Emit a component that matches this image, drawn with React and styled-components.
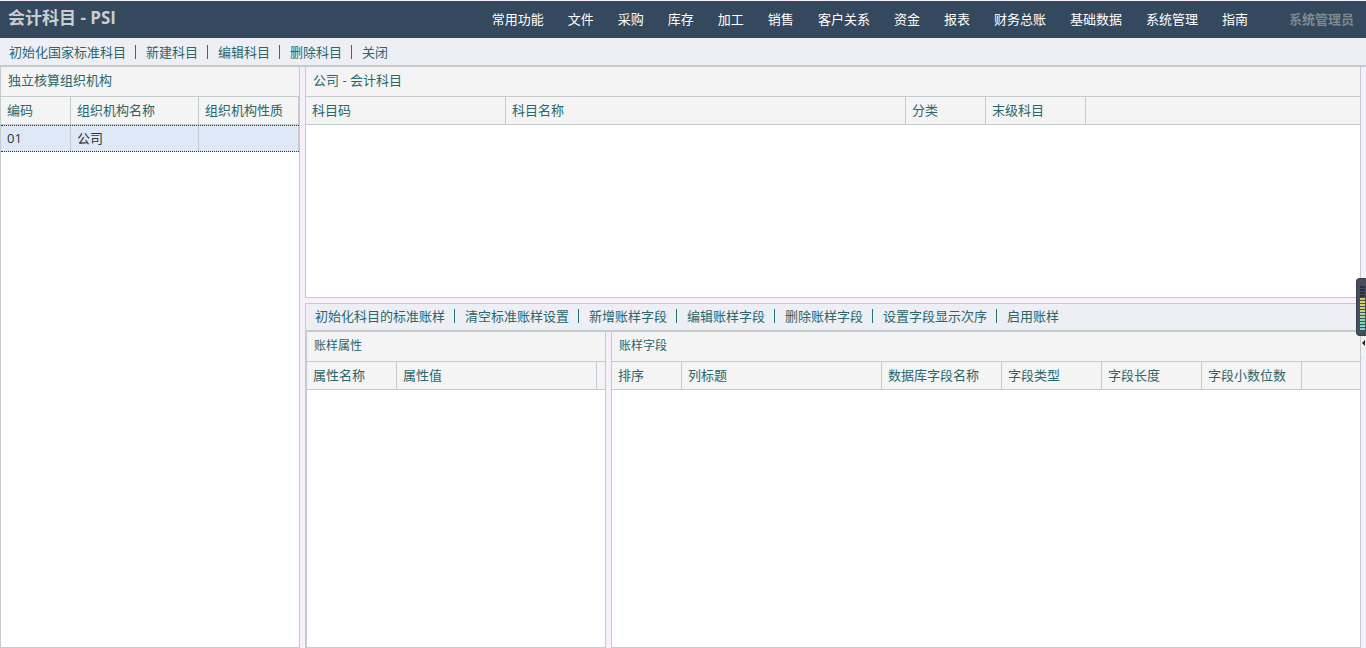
import styled, { createGlobalStyle } from "styled-components";

const GlobalStyle = createGlobalStyle`
  html, body {
    margin: 0;
    padding: 0;
    height: 100%;
    overflow: hidden;
    background: #f7f0fc;
  }
  body {
    font-family: "Open Sans", "Noto Sans CJK SC", sans-serif;
    font-size: 13px;
    line-height: 18px;
  }
  #root {
    height: 100%;
  }
`;

const Page = styled.div`
  position: relative;
  display: flex;
  flex-direction: column;
  width: 1366px;
  height: 648px;
  overflow: hidden;
`;

const Header = styled.header`
  display: flex;
  align-items: center;
  justify-content: space-between;
  height: 37px;
  margin-top: 1px;
  padding: 0 12px 0 8px;
  background: #34495e;
  flex: none;
`;

const Title = styled.div`
  padding-bottom: 4px;
  font-size: 17px;
  font-weight: 700;
  color: #c9cdd2;
`;

const Nav = styled.nav`
  display: flex;
  align-items: center;
  gap: 24px;
  padding-bottom: 2px;
`;

const NavItem = styled.span`
  color: #ffffff;
  white-space: nowrap;
`;

const UserName = styled.span`
  margin-left: 17px;
  color: #7f8890;
  font-weight: 700;
`;

const Toolbar = styled.div`
  display: flex;
  align-items: center;
  height: ${(p) => p.$height}px;
  padding-left: 9px;
  padding-bottom: ${(p) => p.$lift}px;
  background: #eeeef5;
  border-bottom: 2px solid #c3cbcc;
  box-sizing: border-box;
  flex: none;
`;

const ToolItem = styled.span`
  color: #2a666a;
  white-space: nowrap;
  & + &::before {
    content: "";
    display: inline-block;
    width: 1px;
    height: 14px;
    margin: 0 10px 0 9px;
    background: #1f7478;
    vertical-align: -2px;
  }
`;

const Workspace = styled.div`
  display: flex;
  flex: 1;
  min-height: 0;
  padding-right: 5px;
`;

const LeftColumn = styled.div`
  display: flex;
  width: 300px;
  flex: none;
`;

const RightColumn = styled.div`
  display: flex;
  flex-direction: column;
  flex: 1;
  min-width: 0;
  margin-left: 5px;
  gap: 5px;
`;

const Panel = styled.section`
  display: flex;
  flex-direction: column;
  flex: ${(p) => p.$flex || 1};
  min-width: 0;
  background: #ffffff;
  border: 1px solid #c3cbcc;
  border-top: 0;
  box-sizing: border-box;
`;

const PanelTitle = styled.div`
  display: flex;
  align-items: center;
  height: 30px;
  padding-left: 7px;
  padding-bottom: ${(p) => (p.$small ? 1 : 3)}px;
  background: #f4f4f4;
  border-bottom: 1px solid #c3cbcc;
  color: #2a666a;
  font-size: ${(p) => (p.$small ? 12 : 13)}px;
  box-sizing: border-box;
  flex: none;
`;

const HeaderRow = styled.div`
  display: flex;
  height: 28px;
  background: #f4f4f4;
  border-bottom: 1px solid #c3cbcc;
  box-sizing: border-box;
  flex: none;
`;

const HeaderCell = styled.div`
  display: flex;
  align-items: center;
  width: ${(p) => p.$width}px;
  padding-left: 6px;
  padding-bottom: 2px;
  border-right: 1px solid #c3cbcc;
  color: #2a666a;
  box-sizing: border-box;
  flex: none;
`;

const DataRow = styled.div`
  display: flex;
  height: 27px;
  background: #dfe8f6;
  border-top: 1px dotted #333333;
  border-bottom: 1px dotted #333333;
  box-sizing: border-box;
  flex: none;
`;

const DataCell = styled.div`
  display: flex;
  align-items: center;
  width: ${(p) => p.$width}px;
  padding-left: 6px;
  padding-bottom: 2px;
  border-right: 1px solid #c3cbcc;
  color: #333333;
  box-sizing: border-box;
  flex: none;
`;

const LowerArea = styled.div`
  display: flex;
  flex-direction: column;
  flex: 1;
  min-height: 0;
  border-top: 1px solid #c3cbcc;
  border-left: 1px solid #c3cbcc;
  box-sizing: border-box;
`;

const LowerPanels = styled.div`
  display: flex;
  flex: 1;
  min-height: 0;
  gap: 5px;
`;

const Widget = styled.div`
  position: absolute;
  top: 278px;
  right: 0;
  display: flex;
  flex-direction: column;
  gap: 1px;
  width: 10px;
  height: 58px;
  padding: 7px 1px 0 3px;
  background: #474d5d;
  border: 1px solid #3a3f4c;
  border-right: 0;
  border-radius: 4px 0 0 4px;
  box-sizing: border-box;
`;

const WidgetBar = styled.i`
  display: block;
  height: 2px;
  background: ${(p) => p.$color};
`;

const WidgetTab = styled.div`
  position: absolute;
  top: 336px;
  right: 0;
  width: 6px;
  height: 23px;
  background: #f2f2f2;
  border-left: 1px solid #c3cbcc;
  border-radius: 0 0 0 4px;
  box-sizing: border-box;
  &::before {
    content: "";
    position: absolute;
    top: 4px;
    left: 1px;
    border: 3px solid transparent;
    border-left: 0;
    border-right: 3px solid #222222;
  }
`;

const navItems = ["常用功能", "文件", "采购", "库存", "加工", "销售", "客户关系", "资金", "报表", "财务总账", "基础数据", "系统管理", "指南"];
const mainTools = ["初始化国家标准科目", "新建科目", "编辑科目", "删除科目", "关闭"];
const ledgerTools = ["初始化科目的标准账样", "清空标准账样设置", "新增账样字段", "编辑账样字段", "删除账样字段", "设置字段显示次序", "启用账样"];

const orgColumns = [
  { label: "编码", width: 70 },
  { label: "组织机构名称", width: 128 },
  { label: "组织机构性质", width: 100 },
];
const subjectColumns = [
  { label: "科目码", width: 200 },
  { label: "科目名称", width: 400 },
  { label: "分类", width: 80 },
  { label: "末级科目", width: 100 },
];
const propColumns = [
  { label: "属性名称", width: 90 },
  { label: "属性值", width: 200 },
];
const fieldColumns = [
  { label: "排序", width: 70 },
  { label: "列标题", width: 200 },
  { label: "数据库字段名称", width: 120 },
  { label: "字段类型", width: 100 },
  { label: "字段长度", width: 100 },
  { label: "字段小数位数", width: 100 },
];

const barColors = ["#2b2f3a", "#2b2f3a", "#2b2f3a", "#2b2f3a", "#d9c65a", "#e0cf62", "#d9d266", "#c6d46c", "#b6d67c", "#a9d98a", "#9bd994", "#8fd9a0", "#7fd9b5", "#74d9c0", "#6fd9c8"];

function ColumnHeaders({ columns }) {
  return (
    <HeaderRow>
      {columns.map((col) => (
        <HeaderCell key={col.label} $width={col.width}>{col.label}</HeaderCell>
      ))}
    </HeaderRow>
  );
}

export default function App() {
  return (
    <Page>
      <GlobalStyle />
      <Header>
        <Title>会计科目 - PSI</Title>
        <Nav>
          {navItems.map((item) => (
            <NavItem key={item}>{item}</NavItem>
          ))}
          <UserName>系统管理员</UserName>
        </Nav>
      </Header>
      <Toolbar $height={29} $lift={0}>
        {mainTools.map((item) => (
          <ToolItem key={item}>{item}</ToolItem>
        ))}
      </Toolbar>
      <Workspace>
        <LeftColumn>
          <Panel>
            <PanelTitle>独立核算组织机构</PanelTitle>
            <ColumnHeaders columns={orgColumns} />
            <DataRow>
              <DataCell $width={70}>01</DataCell>
              <DataCell $width={128}>公司</DataCell>
              <DataCell $width={100} />
            </DataRow>
          </Panel>
        </LeftColumn>
        <RightColumn>
          <Panel $flex="0 0 231px">
            <PanelTitle>公司 - 会计科目</PanelTitle>
            <ColumnHeaders columns={subjectColumns} />
          </Panel>
          <LowerArea>
            <Toolbar $height={28} $lift={2}>
              {ledgerTools.map((item) => (
                <ToolItem key={item}>{item}</ToolItem>
              ))}
            </Toolbar>
            <LowerPanels>
              <Panel $flex="0 0 300px">
                <PanelTitle $small>账样属性</PanelTitle>
                <ColumnHeaders columns={propColumns} />
              </Panel>
              <Panel>
                <PanelTitle $small>账样字段</PanelTitle>
                <ColumnHeaders columns={fieldColumns} />
              </Panel>
            </LowerPanels>
          </LowerArea>
        </RightColumn>
      </Workspace>
      <Widget>
        {barColors.map((color, i) => (
          <WidgetBar key={i} $color={color} />
        ))}
      </Widget>
      <WidgetTab />
    </Page>
  );
}
